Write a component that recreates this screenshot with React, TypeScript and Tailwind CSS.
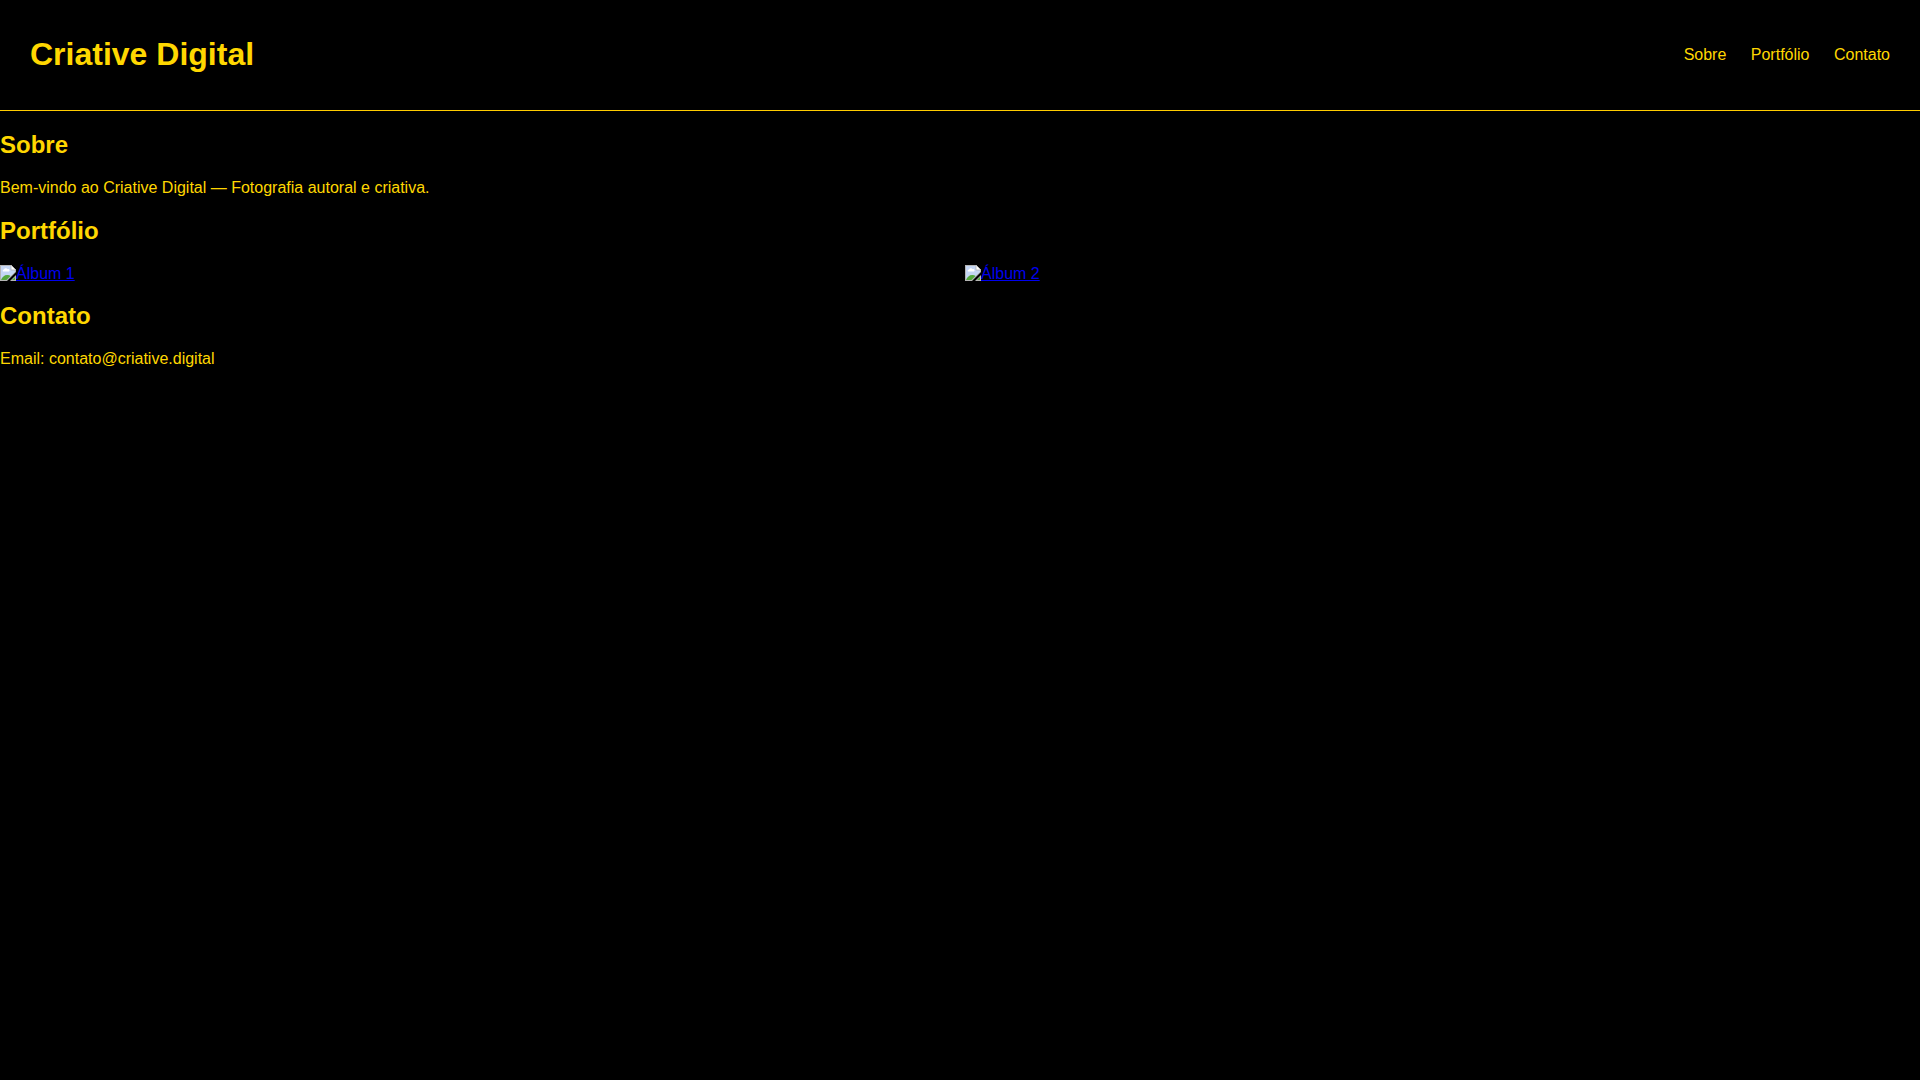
import React from "react";

function BrokenImage() {
  return (
    <svg className="h-4 w-4 shrink-0" viewBox="0 0 16 16" aria-hidden="true">
      <path d="M0 0h11l5 5v2L7 16H0z" fill="#b4b4b4" />
      <path d="M1 1h10v4h4v2L6.500 15H1z" fill="#c5d6f4" />
      <path d="M3 6.500a1.200 1.200 0 0 1 1-2 2 2 0 0 1 3.600-.2A1.300 1.300 0 0 1 9 6.500z" fill="#fff" />
      <path d="M1 15c1-3 3.500-5 6-5 1.500 0 2.700.4 3.500 1L6.500 15z" fill="#54a83c" />
      <path d="M11 0l5 5h-5z" fill="#fff" stroke="#b4b4b4" strokeWidth="0.8" />
      <path d="M16 10v6h-6z" fill="#b4b4b4" />
      <path d="M15 12v3h-3z" fill="#54a83c" />
    </svg>
  );
}

const albums = ["Álbum 1", "Álbum 2"];

export default function App() {
  return (
    <div className="min-h-screen bg-black font-['Liberation_Sans',Arial,sans-serif] text-base leading-[18px] text-[#ffd700]">
      <header className="flex items-center justify-between border-b border-[#ffcc00] px-[30px] py-9">
        <h1 className="pb-0.5 text-[32px] leading-9 font-bold">Criative Digital</h1>
        <nav>
          <a href="#sobre">Sobre</a>{" "}
          <a href="#portfolio" className="ml-5">Portfólio</a>{" "}
          <a href="#contato" className="ml-5">Contato</a>
        </nav>
      </header>
      <main>
        <section id="sobre">
          <h2 className="py-5 text-2xl leading-7 font-bold">Sobre</h2>
          <p>Bem-vindo ao Criative Digital — Fotografia autoral e criativa.</p>
        </section>
        <section id="portfolio">
          <h2 className="py-5 text-2xl leading-7 font-bold">Portfólio</h2>
          <div className="grid grid-cols-2 gap-[10px] leading-[17px]">
            {albums.map((name) => (
              <a key={name} href="#portfolio" className="flex text-[#0000ee] underline">
                <BrokenImage />
                {name}
              </a>
            ))}
          </div>
        </section>
        <section id="contato">
          <h2 className="py-5 text-2xl leading-7 font-bold">Contato</h2>
          <p>Email: contato@criative.digital</p>
        </section>
      </main>
    </div>
  );
}
